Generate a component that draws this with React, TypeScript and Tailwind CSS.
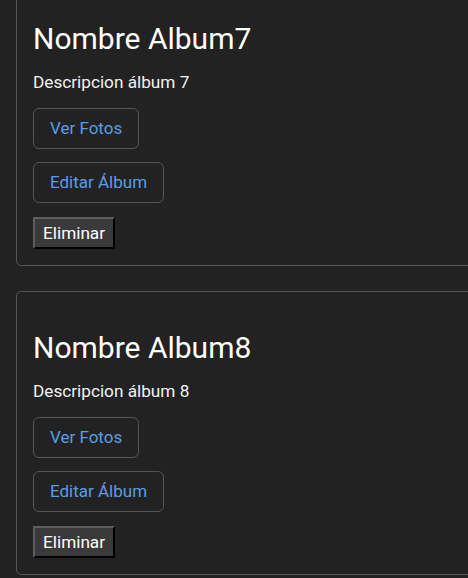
const albums = [
  { id: 7, name: "Nombre Album7", desc: "Descripcion álbum 7" },
  { id: 8, name: "Nombre Album8", desc: "Descripcion álbum 8" },
];

function AlbumCard({ name, desc }: { name: string; desc: string }) {
  return (
    <div className="w-[480px] shrink-0 rounded-[5px] border border-[#555555] px-4 pt-4 pb-4">
      <h2 className="mt-[23px] text-[30px] leading-[34px] font-normal text-white">
        {name}
      </h2>
      <p className="mt-[17px] text-[17.2px] leading-[19px] text-[#f2f2f2]">{desc}</p>

      <div className="mt-4 flex flex-col items-start">
        <button className="mb-[13px] rounded-md border border-[#555555] px-4 py-[10px] text-[17px] leading-[19px] text-[#5c9ce6]">
          Ver Fotos
        </button>
        <button className="mb-[14px] rounded-md border border-[#555555] px-4 py-[10px] text-[17px] leading-[19px] text-[#5c9ce6]">
          Editar Álbum
        </button>
        <button className="border-2 border-t-[#5e5e5e] border-l-[#5e5e5e] border-r-black border-b-black bg-[#3a3a3a] px-2 py-[4px] text-[17.2px] leading-[20px] text-white">
          Eliminar
        </button>
      </div>
    </div>
  );
}

export default function App() {
  return (
    <div
      className="h-[578px] w-[468px] overflow-hidden bg-[#222222]"
      style={{ fontFamily: "Roboto, 'Noto Sans', sans-serif" }}
    >
      <div className="-mt-[18px] flex flex-col gap-[25px] pl-4">
        {albums.map((a) => (
          <AlbumCard key={a.id} name={a.name} desc={a.desc} />
        ))}
      </div>
    </div>
  );
}
